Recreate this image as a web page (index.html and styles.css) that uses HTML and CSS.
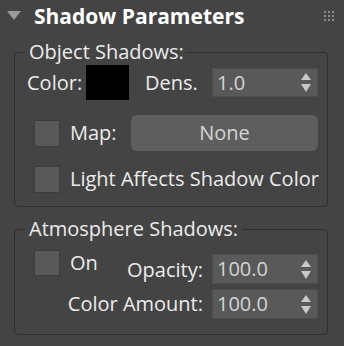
FILE: index.html
```html
<!DOCTYPE html>
<html>
<head>
    <title>Shadow Parameters</title>
    <link rel="stylesheet" href="styles.css">
</head>
<body>
    <div class="rollout">
        <div class="rollout-head">
            <svg class="caret" width="14" height="10" viewBox="0 0 14 10"><polygon points="0,0 14,0 7,9" fill="#9a9a9a"/></svg>
            <span class="rollout-title">Shadow Parameters</span>
            <svg class="grip" width="10" height="10" viewBox="0 0 10 10" fill="#8c8c8c">
                <rect x="0" y="0" width="2" height="2"/><rect x="4" y="0" width="2" height="2"/><rect x="8" y="0" width="2" height="2"/>
                <rect x="0" y="4" width="2" height="2"/><rect x="4" y="4" width="2" height="2"/><rect x="8" y="4" width="2" height="2"/>
                <rect x="0" y="8" width="2" height="2"/><rect x="4" y="8" width="2" height="2"/><rect x="8" y="8" width="2" height="2"/>
            </svg>
        </div>

        <fieldset class="group group-object">
            <legend>Object Shadows:</legend>

            <div class="row row-color">
                <span class="label label-color">Color:</span>
                <span class="swatch"></span>
                <span class="label label-dens">Dens.</span>
                <div class="spinner">
                    <span class="spinner-value">1.0</span>
                    <svg class="arrows" width="10" height="19" viewBox="0 0 10 19" fill="#c8c8c8"><polygon points="5,0 10,7 0,7"/><polygon points="0,11 10,11 5,19"/></svg>
                </div>
            </div>

            <div class="row row-map">
                <span class="check"></span>
                <span class="label label-map">Map:</span>
                <button class="map-button">None</button>
            </div>

            <div class="row row-light">
                <span class="check"></span>
                <span class="label">Light Affects Shadow Color</span>
            </div>
        </fieldset>

        <fieldset class="group group-atmo">
            <legend>Atmosphere Shadows:</legend>

            <div class="atmo-grid">
                <div class="on-cell">
                    <span class="check"></span>
                    <span class="label label-on">On</span>
                </div>
                <span class="label label-right">Opacity:</span>
                <div class="spinner spinner-opacity">
                    <span class="spinner-value">100.0</span>
                    <svg class="arrows" width="10" height="19" viewBox="0 0 10 19" fill="#c8c8c8"><polygon points="5,0 10,7 0,7"/><polygon points="0,11 10,11 5,19"/></svg>
                </div>

                <span class="label label-right label-amount">Color Amount:</span>
                <div class="spinner">
                    <span class="spinner-value">100.0</span>
                    <svg class="arrows" width="10" height="19" viewBox="0 0 10 19" fill="#c8c8c8"><polygon points="5,0 10,7 0,7"/><polygon points="0,11 10,11 5,19"/></svg>
                </div>
            </div>
        </fieldset>
    </div>
</body>
</html>
```

FILE: styles.css
```css
body {
    margin: 0;
    width: 344px;
    height: 346px;
    background-color: #444444;
    font-family: "Open Sans", "Noto Sans", sans-serif;
    font-size: 20px;
    color: #ececec;
    overflow: hidden;
}

.rollout {
    display: flex;
    flex-direction: column;
}

.rollout-head {
    display: flex;
    align-items: flex-start;
    height: 42px;
}

.caret {
    margin: 11px 0 0 7px;
}

.rollout-title {
    margin: 1px 0 0 13px;
    line-height: 30px;
    font-size: 21px;
    font-weight: bold;
    color: #ffffff;
    flex: 1;
}

.grip {
    margin: 11px 10px 0 0;
}

/* Group boxes */
.group {
    margin: 0 16px 0 14px;
    padding: 0 9px 14px 12px;
    border: 1px solid #2f2f2f;
    border-radius: 4px;
    min-width: 0;
}

.group legend {
    padding: 0 4px;
    margin-left: -2px;
    line-height: 20px;
    color: #ececec;
}

.group-atmo {
    margin-top: 12px;
    padding-bottom: 15px;
}

.row {
    display: flex;
    align-items: center;
}

.label {
    line-height: 26px;
    white-space: nowrap;
}

.row-color {
    margin-top: 3px;
    height: 35px;
}

.label-color {
    width: 59px;
}

.swatch {
    width: 43px;
    height: 35px;
    background-color: #000000;
}

.label-dens {
    margin-left: 16px;
    width: 67px;
}

.spinner {
    display: flex;
    align-items: center;
    justify-content: space-between;
    width: 106px;
    height: 29px;
    padding: 0 6px 0 4px;
    box-sizing: border-box;
    background-color: #595959;
    border: 1px solid #4e4e4e;
}

.spinner-value {
    color: #d4d4d4;
    line-height: 26px;
}

.arrows {
    flex-shrink: 0;
}

.check {
    width: 26px;
    height: 27px;
    box-sizing: border-box;
    background-color: #595959;
    border: 1px solid #3c3c3c;
    flex-shrink: 0;
}

.row-map {
    margin-top: 15px;
    height: 36px;
    padding-left: 7px;
}

.label-map {
    margin-left: 10px;
    width: 61px;
}

.map-button {
    width: 187px;
    height: 36px;
    border: none;
    border-radius: 6px;
    background-color: #5e5e5e;
    color: #d4d4d4;
    font-family: inherit;
    font-size: 20px;
    padding: 0 0 2px 0;
}

.row-light {
    margin-top: 15px;
    height: 26px;
    padding-left: 7px;
}

.row-light .label {
    margin-left: 10px;
}

/* Atmosphere grid */
.atmo-grid {
    display: grid;
    grid-template-columns: 1fr auto 106px;
    grid-template-rows: 34px 30px;
    column-gap: 9px;
    row-gap: 5px;
    margin-top: 11px;
}

.atmo-grid .spinner {
    height: 30px;
}

.spinner-opacity {
    margin-top: 4px;
}

.on-cell {
    display: flex;
    align-items: flex-start;
    padding-left: 7px;
}

.on-cell .check {
    height: 26px;
}

.label-on {
    margin-left: 10px;
}

.label-right {
    align-self: center;
    margin-top: 6px;
    text-align: right;
}

.label-amount {
    grid-column: 1 / 3;
    justify-self: end;
    margin-top: 0;
}
```
